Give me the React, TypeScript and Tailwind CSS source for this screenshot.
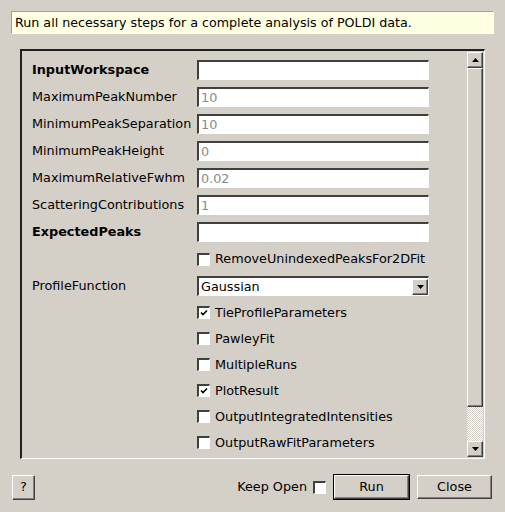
import React from "react";

const raised =
  "bg-[#d4d0c8] border-t border-l border-t-white border-l-white border-b border-r border-b-[#404040] border-r-[#404040] shadow-[inset_-1px_-1px_#808080]";
const sunken =
  "bg-white border-t-2 border-l-2 border-t-[#404040] border-l-[#404040] border-b border-r border-b-white border-r-white";

const Arrow = ({ down }: { down?: boolean }) => (
  <svg width="7" height="4" viewBox="0 0 7 4">
    <path d={down ? "M0 0H7L3.5 4Z" : "M0 4H7L3.5 0Z"} fill="#000" />
  </svg>
);

const CheckBox = ({ checked }: { checked?: boolean }) => (
  <div className={`w-[13px] h-[13px] shrink-0 flex items-center justify-center ${sunken}`}>
    {checked && (
      <svg width="8" height="8" viewBox="0 0 8 8">
        <path d="M1 3.5L3 5.5L7 1.5" stroke="#000" strokeWidth="1.6" fill="none" />
      </svg>
    )}
  </div>
);

const inputRows = [
  { label: "InputWorkspace", value: "", bold: true },
  { label: "MaximumPeakNumber", value: "10" },
  { label: "MinimumPeakSeparation", value: "10" },
  { label: "MinimumPeakHeight", value: "0" },
  { label: "MaximumRelativeFwhm", value: "0.02" },
  { label: "ScatteringContributions", value: "1" },
  { label: "ExpectedPeaks", value: "", bold: true },
];

const checkRows = [
  { label: "TieProfileParameters", checked: true },
  { label: "PawleyFit" },
  { label: "MultipleRuns" },
  { label: "PlotResult", checked: true },
  { label: "OutputIntegratedIntensities" },
  { label: "OutputRawFitParameters" },
];

export default function App() {
  return (
    <div className="w-[505px] h-[512px] bg-[#d4d0c8] overflow-hidden text-[12.8px] text-black font-['DejaVu_Sans',sans-serif] flex flex-col">
      <div className="mx-[11px] mt-[11px] h-[23px] bg-[#ffffe1] border border-t-[#a0a0a0] border-l-[#a0a0a0] border-b-white border-r-white flex items-center pl-[3px] text-[12.7px]">
        Run all necessary steps for a complete analysis of POLDI data.
      </div>

      <div className="mt-[15px] ml-[20px] w-[465px] h-[410px] border-t-2 border-l-2 border-t-[#202020] border-l-[#202020] border-b border-r border-b-white border-r-white flex">
        <div className="flex-1 flex flex-col gap-[7px] pt-[9px] pl-[10px]">
          {inputRows.map((r) => (
            <div key={r.label} className="flex items-center h-[20px]">
              <span className={`w-[165px] ${r.bold ? "font-bold" : ""}`}>{r.label}</span>
              <div className={`w-[232px] h-[20px] flex items-center pl-[2px] text-[#8a8a8a] ${sunken}`}>
                {r.value}
              </div>
            </div>
          ))}
          <div className="flex items-center h-[20px] pl-[165px] gap-[5px]">
            <CheckBox />
            <span>RemoveUnindexedPeaksFor2DFit</span>
          </div>
          <div className="flex items-center h-[20px]">
            <span className="w-[165px]">ProfileFunction</span>
            <div className={`w-[232px] h-[20px] flex items-center justify-between pl-[2px] ${sunken}`}>
              <span>Gaussian</span>
              <div className={`w-[16px] h-[16px] flex items-center justify-center ${raised}`}>
                <Arrow down />
              </div>
            </div>
          </div>
          {checkRows.map((r) => (
            <div key={r.label} className="flex items-center h-[19px] pl-[165px] gap-[5px]">
              <CheckBox checked={r.checked} />
              <span>{r.label}</span>
            </div>
          ))}
        </div>

        <div className="w-[16px] mr-[1px] py-[1px] flex flex-col">
          <div className={`h-[16px] flex items-center justify-center ${raised}`}>
            <Arrow />
          </div>
          <div className={`h-[339px] ${raised}`} />
          <div className="flex-1 bg-[repeating-conic-gradient(#ffffff_0%_25%,#d4d0c8_0%_50%)] bg-[length:2px_2px]" />
          <div className={`h-[16px] flex items-center justify-center ${raised}`}>
            <Arrow down />
          </div>
        </div>
      </div>

      <div className="mt-[15px] pl-[12px] pr-[13px] flex items-center">
        <button className={`w-[23px] h-[25px] ${raised}`}>?</button>
        <div className="flex-1" />
        <span>Keep Open</span>
        <div className="ml-[6px]">
          <CheckBox />
        </div>
        <div className="ml-[7px] border border-black">
          <button className={`w-[75px] h-[24px] ${raised}`}>Run</button>
        </div>
        <button className={`ml-[7px] w-[75px] h-[24px] ${raised}`}>Close</button>
      </div>
    </div>
  );
}
